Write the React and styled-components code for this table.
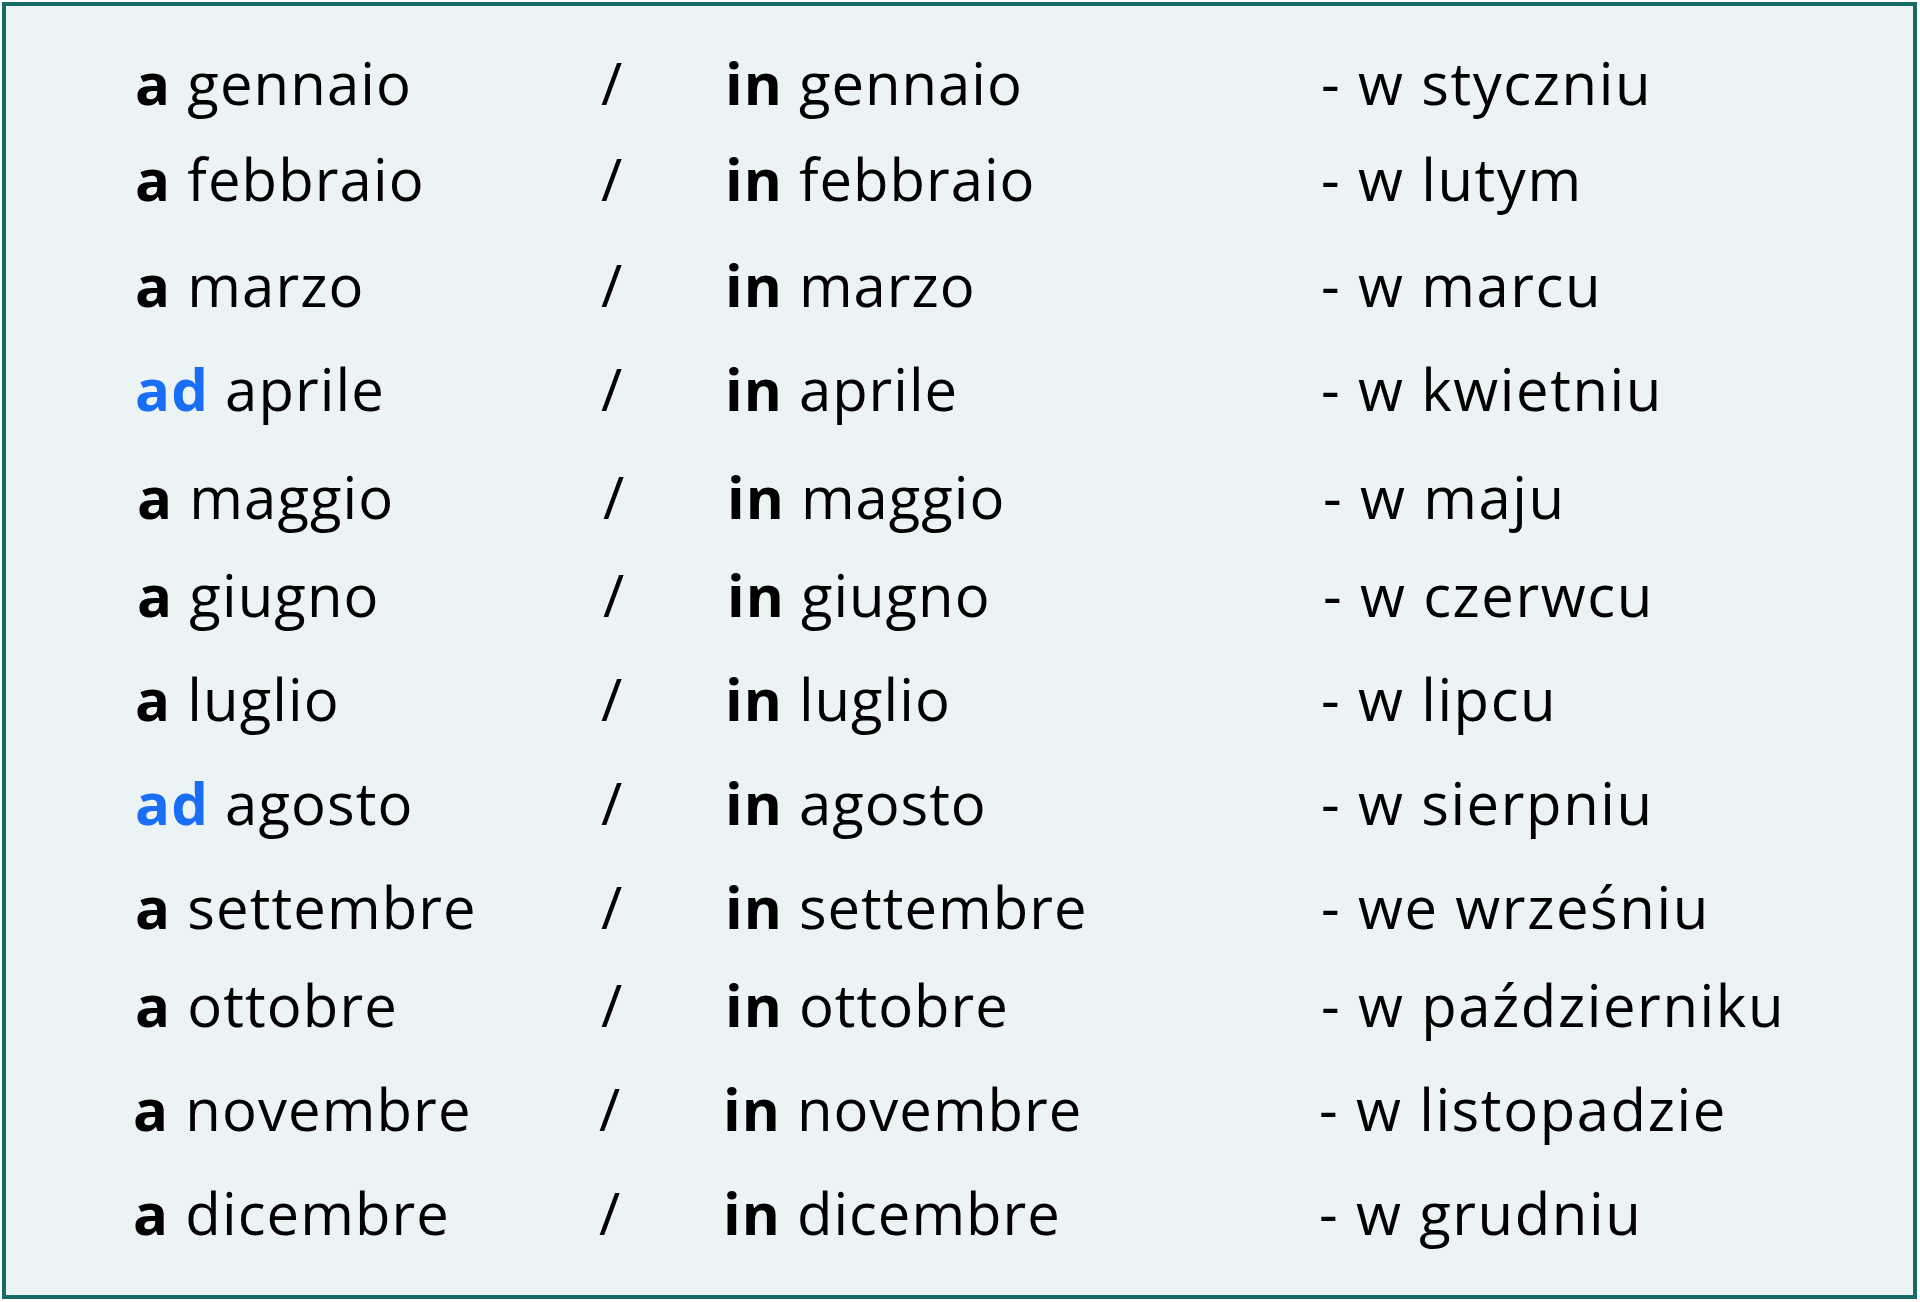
import { createGlobalStyle } from "styled-components";
import styled from "styled-components";

const GlobalStyle = createGlobalStyle`
  html, body {
    margin: 0;
    padding: 0;
    background: #ffffff;
  }
`;

const Frame = styled.div`
  box-sizing: border-box;
  margin: 2px;
  width: 1915px;
  height: 1297px;
  border: 4px solid #166b69;
  background: #ecf3f5;
  padding-top: 48px;
  font-family: "Open Sans", "Noto Sans", sans-serif;
  font-size: 58px;
  color: #000;
`;

const Row = styled.div`
  display: grid;
  grid-template-columns: 466px 124px 596px 1fr;
  height: 58px;
  line-height: 58px;
  margin-top: ${(props) => props.gap}px;
  padding-left: ${(props) => 129 + props.shift}px;
  white-space: nowrap;
`;

const Cell = styled.div`
  letter-spacing: ${(props) => props.spacing || 0}px;
`;

const Prep = styled.b`
  font-weight: 700;
  color: ${(props) => (props.blue ? "#1a6ef6" : "#000")};
`;

const months = [
  { it: "gennaio", pre: "a", pl: "- w styczniu", gap: 0, shift: 0 },
  { it: "febbraio", pre: "a", pl: "- w lutym", gap: 38, shift: 0 },
  { it: "marzo", pre: "a", pl: "- w marcu", gap: 48, shift: 0 },
  { it: "aprile", pre: "ad", pl: "- w kwietniu", gap: 46, shift: 0 },
  { it: "maggio", pre: "a", pl: "- w maju", gap: 50, shift: 2 },
  { it: "giugno", pre: "a", pl: "- w czerwcu", gap: 40, shift: 2 },
  { it: "luglio", pre: "a", pl: "- w lipcu", gap: 46, shift: 0 },
  { it: "agosto", pre: "ad", pl: "- w sierpniu", gap: 46, shift: 0 },
  { it: "settembre", pre: "a", pl: "- we wrześniu", gap: 46, shift: 0 },
  { it: "ottobre", pre: "a", pl: "- w październiku", gap: 40, shift: 0 },
  { it: "novembre", pre: "a", pl: "- w listopadzie", gap: 46, shift: -2 },
  { it: "dicembre", pre: "a", pl: "- w grudniu", gap: 46, shift: -2 },
];

export default function App() {
  return (
    <>
      <GlobalStyle />
      <Frame>
        {months.map((m) => (
          <Row key={m.it} gap={m.gap} shift={m.shift}>
            <Cell spacing={1.1}>
              <Prep blue={m.pre === "ad"}>{m.pre}</Prep> {m.it}
            </Cell>
            <Cell>/</Cell>
            <Cell spacing={1}>
              <Prep>in</Prep> {m.it}
            </Cell>
            <Cell spacing={1.6}>{m.pl}</Cell>
          </Row>
        ))}
      </Frame>
    </>
  );
}
